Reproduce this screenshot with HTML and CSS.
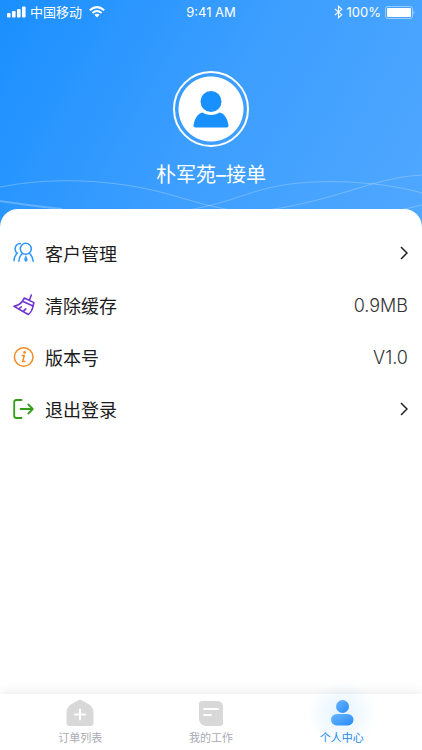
FILE: index.html
```html
<!DOCTYPE html>
<html lang="zh-CN">
<head>
<meta charset="utf-8">
<meta name="viewport" content="width=device-width, initial-scale=1">
<title>个人中心</title>
<link rel="stylesheet" href="styles.css">
</head>
<body>
<div class="app">
  <header class="hero">
    <svg class="waves" viewBox="0 0 422 60" preserveAspectRatio="none" fill="none" stroke="#fff" aria-hidden="true">
      <path opacity=".26" d="M0 20C40 12 85 12 125 18C165 24 185 33 211 39L230 43"/>
      <path opacity=".26" stroke-width="2" d="M0 34C20 37 42 40 62 42"/>
      <path opacity=".24" d="M188 43C235 35 248 23 290 17C328 12 385 15 422 26"/>
      <path opacity=".24" d="M268 43C310 37 345 25 372 17C390 12 405 9 422 8"/>
      <path opacity=".24" d="M400 43L422 38"/>
    </svg>
    <div class="status">
      <div class="status-left">
        <svg width="19" height="12" viewBox="0 0 19 12" fill="#fff" aria-hidden="true"><rect y="7" width="3.6" height="4.5" rx="1"/><rect x="5" y="5" width="3.6" height="6.5" rx="1"/><rect x="10" y="3" width="3.6" height="8.500" rx="1"/><rect x="15" y="0.500" width="3.600" height="11" rx="1"/></svg>
        <span>中国移动</span>
        <svg class="wifi" width="16" height="12" viewBox="0 0 16 12" aria-hidden="true"><g fill="none" stroke="#fff" stroke-width="2"><path d="M.8 4.300Q8-2 15.200 4.300"/><path d="M3.400 7Q8 3 12.600 7"/></g><path fill="#fff" d="M5.400 8.700Q8 6.700 10.600 8.700L8 11.500Z"/></svg>
      </div>
      <span class="clock">9:41 AM</span>
      <div class="status-right">
        <svg width="9" height="14" viewBox="0 0 9 14" fill="none" stroke="#fff" stroke-width="1.100" aria-hidden="true"><path d="M.8 3.800L7.800 9.800L4.500 12.700V1.300L7.800 4.200L.8 10.200"/></svg>
        <span>100%</span>
        <svg width="30" height="13" viewBox="0 0 30 13" aria-hidden="true"><rect x=".5" y=".5" width="27" height="12" rx="2.500" fill="none" stroke="#fff" opacity=".45"/><rect x="2" y="2" width="24" height="9" rx="1" fill="#fff"/><path d="M28.500 4.500Q30.500 6.500 28.500 8.500Z" fill="#fff" opacity=".5"/></svg>
      </div>
    </div>
    <div class="avatar">
      <svg width="36" height="38" viewBox="0 0 36 38" fill="#1890ff" aria-hidden="true"><circle cx="18" cy="11.500" r="10.500"/><path d="M9.500 22.500C13.500 25.800 22.500 25.800 26.500 22.500C31.500 23.500 34.500 29 35.500 35.500Q35.700 37.500 33.500 37.500H2.500Q.3 37.500.5 35.500C1.500 29 4.500 23.500 9.500 22.500Z"/></svg>
    </div>
    <h1 class="name">朴军苑–接单</h1>
  </header>

  <main class="panel">
    <a class="row" href="#customers">
      <svg class="icon" viewBox="0 0 22 22" fill="none" stroke="#2f96fa" stroke-width="1.500" stroke-linecap="round" aria-hidden="true"><circle cx="12.800" cy="6.800" r="5.500"/><path d="M9.400 11.600C7.300 13.300 6 16 5.800 19.200M16.300 11.300C18.500 13.200 20 15.800 20.200 19.200M7.300 1.600C1.500 2.200.8 8.700 4.200 11.200C2.200 13 1.200 15.600 1 18.600"/><path fill="#2f96fa" stroke-width=".6" d="M12.900 14L14.500 18L12.900 19.800L11.400 18Z"/></svg>
      <span class="label">客户管理</span>
      <svg class="chevron" viewBox="0 0 8 14" aria-hidden="true"><path d="M1 1L7 7L1 13"/></svg>
    </a>
    <button class="row" type="button">
      <svg class="icon" viewBox="0 0 22 22" fill="none" stroke="#7135d2" stroke-width="1.600" stroke-linecap="round" stroke-linejoin="round" aria-hidden="true"><path d="M18.300 1L16.600 5.800M11.300 4L20.900 8.600L20 12L9.500 7.200Z"/><path d="M9.500 7.200C7.500 9.800 4.800 11.500 1 12.400L15.300 20.500C17.800 18.500 19.500 15.500 20 12M5.800 14.800L8.300 12.900M10.300 17.400L12.800 14.900"/></svg>
      <span class="label">清除缓存</span>
      <span class="value">0.9MB</span>
    </button>
    <div class="row">
      <svg class="icon" viewBox="0 0 22 22" fill="none" stroke="#f68b22" stroke-width="1.500" stroke-linecap="round" aria-hidden="true"><circle cx="10.700" cy="11" r="9.300"/><path d="M9.200 9.500H11.200L9.700 15.500H11.800"/><circle cx="11.600" cy="6.400" r=".7" fill="#f68b22"/></svg>
      <span class="label">版本号</span>
      <span class="value">V1.0</span>
    </div>
    <button class="row" type="button">
      <svg class="icon" viewBox="0 0 22 22" fill="none" stroke="#349e16" stroke-width="1.800" stroke-linecap="round" stroke-linejoin="round" aria-hidden="true"><path d="M8.500 2H3.500Q1.200 2 1.200 4.300V17.700Q1.200 20 3.500 20H8.500M7.500 11H19.800M15.300 6.500L19.800 11L15.300 15.500"/></svg>
      <span class="label">退出登录</span>
      <svg class="chevron" viewBox="0 0 8 14" aria-hidden="true"><path d="M1 1L7 7L1 13"/></svg>
    </button>
  </main>

  <nav class="tabs">
    <a class="tab" href="#orders">
      <svg width="28" height="26" viewBox="0 0 28 26" aria-hidden="true"><path fill="#d8d8d8" d="M11.500.8Q14-.6 16.500.8L24 5Q27.500 8 27.500 13V23Q27.500 26 24.500 26H3.500Q.5 26 .5 23V13Q.5 8 4 5Z"/><path stroke="#fff" stroke-width="2" stroke-linecap="round" d="M9 14.500H19M14 9.500V19.500"/></svg>
      <span>订单列表</span>
    </a>
    <a class="tab" href="#work">
      <svg width="26" height="26" viewBox="0 0 26 26" aria-hidden="true"><path fill="#d8d8d8" d="M4 1H19Q25 1 25 7V23Q25 26 22 26H8Q1 25 1 18V4Q1 1 4 1Z"/><path stroke="#fff" stroke-width="2" stroke-linecap="round" d="M6 9H20M6 15H13"/></svg>
      <span>我的工作</span>
    </a>
    <a class="tab active" href="#me" aria-current="page">
      <svg width="26" height="26" viewBox="0 0 26 26" aria-hidden="true"><defs><linearGradient id="me" x1="0" y1="0" x2="1" y2="1"><stop stop-color="#6cb7ff"/><stop offset="1" stop-color="#2589fa"/></linearGradient></defs><circle cx="13.500" cy="6.500" r="6.500" fill="url(#me)"/><rect x="2" y="14" width="22.500" height="11.500" rx="5.700" fill="url(#me)"/></svg>
      <span>个人中心</span>
    </a>
  </nav>
</div>
</body>
</html>
```
FILE: styles.css
```css
* {
  box-sizing: border-box;
}

body {
  margin: 0;
  font-family: Inter, "Noto Sans CJK SC", sans-serif;
  color: #1c1c1c;
  background: #fff;
}

.app {
  display: flex;
  flex-direction: column;
  min-height: 100vh;
}

.hero {
  position: relative;
  display: flex;
  flex-direction: column;
  align-items: center;
  padding-bottom: 38px;
  color: #fff;
  background: linear-gradient(120deg, #1a8fff 0%, #3c9eff 50%, #50a8ff 100%);
}

.waves {
  position: absolute;
  left: 0;
  bottom: 0;
  width: 100%;
  height: 60px;
}

.status {
  display: grid;
  grid-template-columns: 1fr auto 1fr;
  align-items: center;
  width: 100%;
  height: 24px;
  padding: 0 7px;
  font-size: 13px;
  line-height: 20px;
}

.status-left,
.status-right {
  display: flex;
  align-items: center;
  gap: 4px;
}

.wifi {
  margin-left: 3px;
}

.status-right {
  justify-content: flex-end;
}

.avatar {
  display: flex;
  align-items: center;
  justify-content: center;
  width: 76px;
  height: 76px;
  margin-top: 47px;
  border: 2px solid #fff;
  border-radius: 50%;
  background: radial-gradient(circle, #fff 32px, transparent 33px);
}

.name {
  margin: 14px 0 0;
  font-size: 20px;
  font-weight: 400;
  line-height: 28px;
}

.panel {
  position: relative;
  flex: 1;
  margin-top: -18px;
  padding: 18px 14px 18px 13px;
  border-radius: 18px 18px 0 0;
  background: #fff;
}

.row {
  display: flex;
  align-items: center;
  gap: 10px;
  width: 100%;
  height: 52px;
  padding: 0;
  border: 0;
  background: none;
  color: inherit;
  font: inherit;
  font-size: 18px;
  text-align: left;
  text-decoration: none;
}

.icon {
  width: 22px;
  height: 22px;
}

.label {
  flex: 1;
}

.value {
  color: #333;
  font-weight: 300;
}

.chevron {
  width: 8px;
  height: 14px;
  fill: none;
  stroke: #222;
  stroke-width: 1.5;
}

.tabs {
  position: relative;
  display: grid;
  grid-template-columns: repeat(3, 1fr);
  padding: 6px 15px 3px;
  background: #fff;
  box-shadow: 0 -2px 10px rgba(0, 0, 0, 0.08);
}

.tab {
  position: relative;
  display: flex;
  flex-direction: column;
  align-items: center;
  gap: 3px;
  color: #aaaab2;
  font-size: 11px;
  line-height: 18px;
  text-decoration: none;
}

.tab svg,
.tab span {
  position: relative;
}

.tab.active {
  color: #2589ec;
}

.tab.active::before {
  content: "";
  position: absolute;
  top: -20px;
  left: calc(50% - 34px);
  width: 68px;
  height: 68px;
  background: radial-gradient(closest-side, rgba(80, 180, 255, 0.16), rgba(80, 180, 255, 0));
}
```
